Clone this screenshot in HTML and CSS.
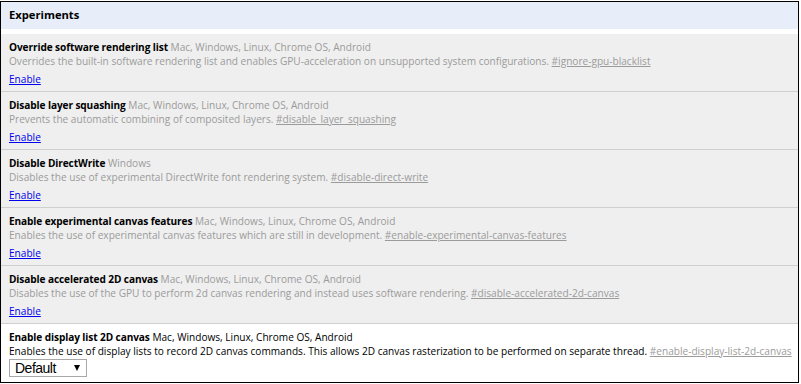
FILE: index.html
```html
<!DOCTYPE html>
<html>
<head>
<meta charset="utf-8">
<link rel="stylesheet" href="styles.css">
</head>
<body>
<div class="frame">
  <div class="header">Experiments</div>
  <div class="list">
    <div class="exp">
      <div class="title"><b>Override software rendering list</b> <span class="plat">Mac, Windows, Linux, Chrome OS, Android</span></div>
      <div class="desc">Overrides the built-in software rendering list and enables GPU-acceleration on unsupported system configurations. <a class="hash" href="#">#ignore-gpu-blacklist</a></div>
      <div class="act"><a class="link" href="#">Enable</a></div>
    </div>
    <div class="exp">
      <div class="title"><b>Disable layer squashing</b> <span class="plat">Mac, Windows, Linux, Chrome OS, Android</span></div>
      <div class="desc">Prevents the automatic combining of composited layers. <a class="hash" href="#">#disable_layer_squashing</a></div>
      <div class="act"><a class="link" href="#">Enable</a></div>
    </div>
    <div class="exp">
      <div class="title"><b>Disable DirectWrite</b> <span class="plat">Windows</span></div>
      <div class="desc">Disables the use of experimental DirectWrite font rendering system. <a class="hash" href="#">#disable-direct-write</a></div>
      <div class="act"><a class="link" href="#">Enable</a></div>
    </div>
    <div class="exp">
      <div class="title"><b>Enable experimental canvas features</b> <span class="plat">Mac, Windows, Linux, Chrome OS, Android</span></div>
      <div class="desc">Enables the use of experimental canvas features which are still in development. <a class="hash" href="#">#enable-experimental-canvas-features</a></div>
      <div class="act"><a class="link" href="#">Enable</a></div>
    </div>
    <div class="exp">
      <div class="title"><b>Disable accelerated 2D canvas</b> <span class="plat">Mac, Windows, Linux, Chrome OS, Android</span></div>
      <div class="desc">Disables the use of the GPU to perform 2d canvas rendering and instead uses software rendering. <a class="hash" href="#">#disable-accelerated-2d-canvas</a></div>
      <div class="act"><a class="link" href="#">Enable</a></div>
    </div>
    <div class="exp on">
      <div class="title"><b>Enable display list 2D canvas</b> <span class="plat">Mac, Windows, Linux, Chrome OS, Android</span></div>
      <div class="desc">Enables the use of display lists to record 2D canvas commands. This allows 2D canvas rasterization to be performed on separate thread. <a class="hash" href="#">#enable-display-list-2d-canvas</a></div>
      <div class="act"><span class="select"><span class="sel-text">Default</span><span class="arrow"></span></span></div>
    </div>
  </div>
</div>
</body>
</html>
```

FILE: styles.css
```css
html, body {
  margin: 0;
  padding: 0;
  background: #fff;
}
body {
  font-family: "Open Sans", "Noto Sans", sans-serif;
  font-size: 10.1px;
  color: #000;
}
.frame {
  margin-top: 1px;
  width: 797px;
  height: 380px;
  border: 1px solid #000;
  overflow: hidden;
}
.header {
  background: #e8eef9;
  height: 27px;
  line-height: 26px;
  padding-left: 8px;
  font-weight: bold;
  font-size: 11.2px;
}
.list {
  margin-top: 5px;
}
.exp {
  background: #efefef;
  border-bottom: 1px solid #cfcfcf;
  padding: 6px 8px 3px;
  height: 48px;
}
.exp.on {
  background: #fff;
  border-bottom: none;
}
.title b {
  letter-spacing: -0.1px;
}
.title, .desc {
  line-height: 14px;
  white-space: nowrap;
}
.desc {
  color: #9b9b9b;
}
.plat {
  color: #9b9b9b;
}
.exp.on .desc, .exp.on .plat {
  color: #000;
}
.hash, .exp.on .desc .hash {
  color: #9b9b9b;
  text-decoration: underline;
}
.act {
  margin-top: 3px;
  line-height: 16px;
}
.exp.on .act {
  margin-top: 1px;
}
.link {
  color: #0000ee;
  text-decoration: underline;
}
.select {
  display: flex;
  align-items: center;
  justify-content: space-between;
  box-sizing: border-box;
  width: 78px;
  height: 18px;
  border: 1px solid #a9a9a9;
  padding: 0 6px 0 5px;
  background: #fff;
}
.sel-text {
  font-family: "Liberation Sans", Arial, sans-serif;
  font-size: 14px;
  letter-spacing: -0.5px;
  line-height: 16px;
}
.arrow {
  width: 0;
  height: 0;
  border-left: 3px solid transparent;
  border-right: 3px solid transparent;
  border-top: 6px solid #000;
}
```
